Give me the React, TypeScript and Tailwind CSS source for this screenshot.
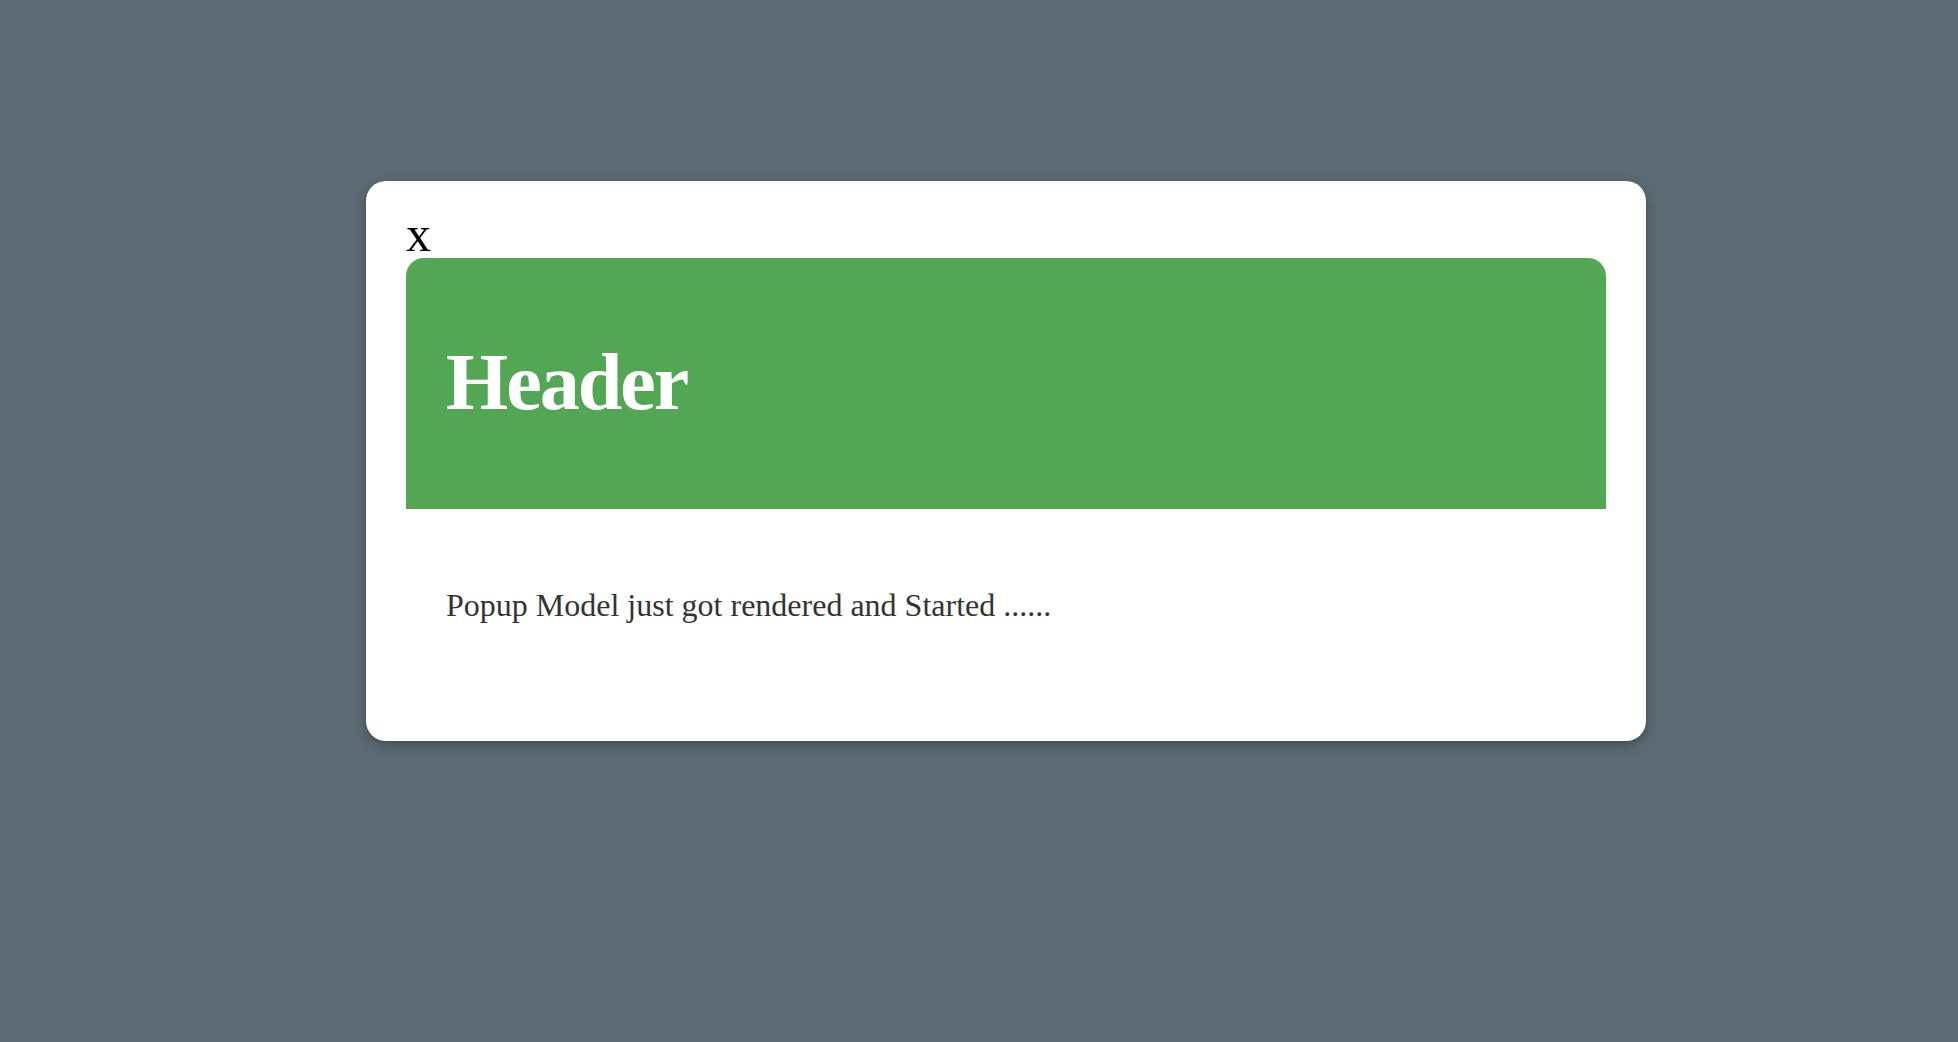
const App = () => {
    return (
        <div className="min-h-screen w-full bg-[#5c6b73] pt-[181px] pl-[366px]" style={{ fontFamily: '"Liberation Serif", "Times New Roman", serif' }}>
            <div className="w-[1280px] h-[560px] bg-white rounded-[20px] shadow-[0_4px_12px_rgba(0,0,0,0.3)] px-[40px] pt-[29px] flex flex-col">
                <button className="self-start text-[50px] leading-[38px] text-black h-[48px] font-['Liberation_Serif',serif]">x</button>
                <div className="bg-[#53a653] rounded-t-[18px] h-[251px] flex items-center px-[40px] pb-[4px]">
                    <h1 className="text-white font-bold text-[80px] leading-none tracking-[-2px] font-['Liberation_Serif',serif]">Header</h1>
                </div>
                <div className="px-[40px] pt-[76px]">
                    <p className="text-[#333] text-[32px] leading-[40px] font-['Liberation_Serif',serif]">Popup Model just got rendered and Started ......</p>
                </div>
            </div>
        </div>
    );
};

export default App;
